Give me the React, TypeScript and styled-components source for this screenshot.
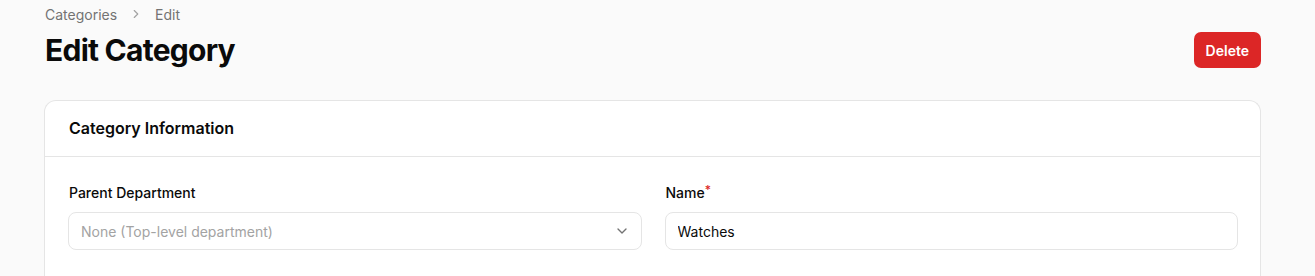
import * as React from 'react'
import styled, { createGlobalStyle } from 'styled-components'

const GlobalStyle = createGlobalStyle`
  * { box-sizing: border-box; }
  body {
    margin: 0;
    background: #fafafa;
    font-family: Inter, "Noto Sans", sans-serif;
    color: #0a0a0a;
  }
`

export default function App() {
  return (
    <>
      <GlobalStyle />
      <Page>
        <Breadcrumb>
          <Crumb>Categories</Crumb>
          <Sep>
            <svg width="14" height="14" viewBox="0 0 24 24" fill="none" stroke="currentColor" strokeWidth="2" strokeLinecap="round" strokeLinejoin="round">
              <path d="m9 18 6-6-6-6" />
            </svg>
          </Sep>
          <Crumb>Edit</Crumb>
        </Breadcrumb>
        <Header>
          <Title>Edit Category</Title>
          <DeleteButton>Delete</DeleteButton>
        </Header>
        <Card>
          <CardHeader>Category Information</CardHeader>
          <CardBody>
            <Field>
              <Label>Parent Department</Label>
              <SelectBox>
                <Placeholder>None (Top-level department)</Placeholder>
                <svg width="16" height="16" viewBox="0 0 24 24" fill="none" stroke="#737373" strokeWidth="2" strokeLinecap="round" strokeLinejoin="round">
                  <path d="m6 9 6 6 6-6" />
                </svg>
              </SelectBox>
            </Field>
            <Field>
              <Label>
                Name<Required>*</Required>
              </Label>
              <Input defaultValue="Watches" />
            </Field>
          </CardBody>
        </Card>
      </Page>
    </>
  )
}

const Page = styled.div`
  padding: 4px 54px 0 44px;
`

const Breadcrumb = styled.nav`
  display: flex;
  align-items: center;
  gap: 12px;
  height: 20px;
  padding-left: 1px;
  font-size: 14px;
  color: #737373;
`

const Crumb = styled.span``

const Sep = styled.span`
  display: flex;
  color: #a3a3a3;
`

const Header = styled.div`
  display: flex;
  align-items: center;
  justify-content: space-between;
  margin-top: 8px;
  height: 36px;
`

const Title = styled.h1`
  margin: 0;
  padding-left: 1px;
  font-size: 30px;
  font-weight: 700;
  letter-spacing: -0.75px;
  line-height: 36px;
`

const DeleteButton = styled.button`
  height: 36px;
  padding: 0 12px;
  border: none;
  border-radius: 7px;
  background: #dc2626;
  color: #fff;
  font-family: inherit;
  font-size: 14px;
  font-weight: 600;
`

const Card = styled.section`
  margin-top: 32px;
  background: #fff;
  border: 1px solid #e5e5e5;
  border-radius: 12px;
  border-bottom: none;
  border-bottom-left-radius: 0;
  border-bottom-right-radius: 0;
`

const CardHeader = styled.div`
  padding: 17px 24px;
  line-height: 21px;
  font-size: 16px;
  font-weight: 600;
  border-bottom: 1px solid #e5e5e5;
`

const CardBody = styled.div`
  display: grid;
  grid-template-columns: 1fr 1fr;
  gap: 23px;
  padding: 26px 22px 30px 23px;
`

const Field = styled.div`
  display: flex;
  flex-direction: column;
  gap: 9px;
`

const Label = styled.label`
  padding-left: 1px;
  font-size: 14px;
  font-weight: 500;
  line-height: 20px;
`

const Required = styled.span`
  color: #dc2626;
  font-size: 12px;
  vertical-align: top;
  position: relative;
  top: -3px;
`

const SelectBox = styled.div`
  display: flex;
  align-items: center;
  justify-content: space-between;
  height: 38px;
  padding: 0 11px 0 12px;
  border: 1px solid #e5e5e5;
  border-radius: 8px;
  background: #fff;
`

const Placeholder = styled.span`
  font-size: 14px;
  color: #a3a3a3;
`

const Input = styled.input`
  height: 38px;
  padding: 0 12px;
  border: 1px solid #e5e5e5;
  border-radius: 8px;
  background: #fff;
  font-family: inherit;
  font-size: 14px;
  color: #0a0a0a;
  outline: none;
`
